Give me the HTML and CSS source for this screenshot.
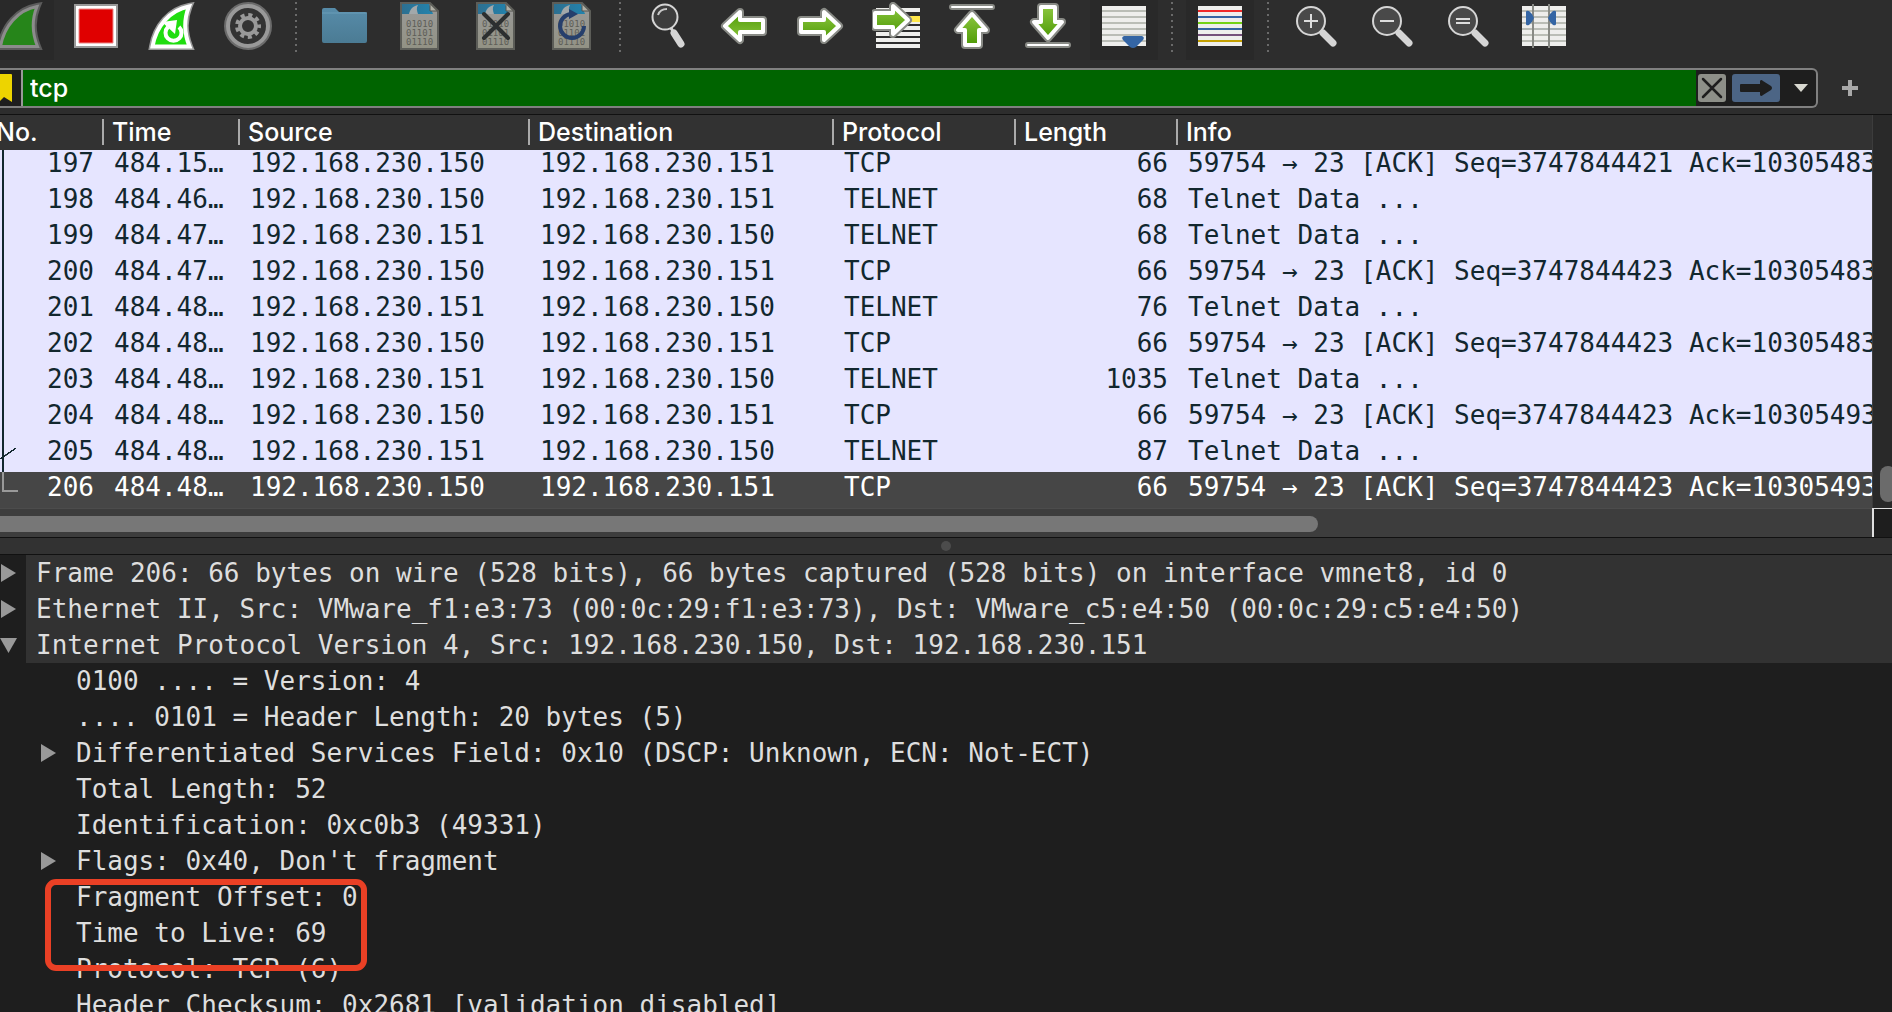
FILE: index.html
```html
<!DOCTYPE html>
<html lang="en">
<head>
<meta charset="utf-8">
<title>Packet capture</title>
<link rel="stylesheet" href="styles.css">
</head>
<body>
<svg class="defs" aria-hidden="true">
  <defs>
    <linearGradient id="leaf" x1="0" y1="0" x2="0" y2="1"><stop offset="0" stop-color="#8cc63f"/><stop offset="1" stop-color="#4e9a06"/></linearGradient>
    <linearGradient id="paper" x1="0" y1="0" x2="0" y2="1"><stop offset="0" stop-color="#9a9a9a"/><stop offset="1" stop-color="#929284"/></linearGradient>
    <linearGradient id="sky" x1="0" y1="0" x2="1" y2="0"><stop offset="0" stop-color="#2d6f90"/><stop offset="1" stop-color="#2283ad"/></linearGradient>
    <linearGradient id="folder" x1="0" y1="0" x2="0" y2="1"><stop offset="0" stop-color="#578ca9"/><stop offset="1" stop-color="#4b7b94"/></linearGradient>
    <path id="fin" d="M4.5 44.5C8 24 22 8 41 4.500C35.500 18 36.500 32 41.500 44.500Z"/>
    <path id="arrow" d="M43 24 28 10V18H5V30H28V38Z"/>
    <g id="file">
      <path d="M5 1H34L42 9V47H5Z" fill="url(#paper)"/>
      <path d="M6 2H33L37 12H6Z" fill="url(#sky)"/>
      <path d="M13 12C14 7 17 4 22 3C20 6 21 9 22 12Z" fill="#a2a8aa"/>
      <path d="M34 1V9H42Z" fill="#b0b0a6" stroke="#555550" stroke-width="1"/>
      <path d="M5 1H34L42 9V47H5Z" fill="none" stroke="#5c5d58" stroke-width="2"/>
      <g class="bits"><text x="10" y="25">01010</text><text x="10" y="34">01101</text><text x="10" y="43">01110</text></g>
    </g>
    <g id="lens">
      <circle cx="19" cy="19" r="14" fill="#494949" stroke="#d5d5d5" stroke-width="2"/>
      <path d="M31 31 41 41" stroke="#d5d5d5" stroke-width="7" stroke-linecap="round"/>
    </g>
    <path id="sheet" d="M2 4H46V44H2Z" fill="#eeeeec"/>
  </defs>
</svg>

<div class="toolbar" role="toolbar" aria-label="Main">
  <button class="tool pressed" aria-label="Start capture"><svg viewBox="0 0 48 48"><use href="#fin" fill="none" stroke="#5c5c5c" stroke-width="7"/><use href="#fin" fill="#26851a" stroke="#8c8c8c" stroke-width="3"/></svg></button>
  <button class="tool" aria-label="Stop capture"><svg viewBox="0 0 48 48"><path d="M2 2H46V46H2Z" fill="#999"/><path d="M4 4H44V44H4Z" fill="#fff"/><path d="M7 7H41V41H7Z" fill="#e00000" stroke="#e88" stroke-width="1"/></svg></button>
  <button class="tool" aria-label="Restart capture"><svg viewBox="0 0 48 48"><use href="#fin" fill="none" stroke="#999" stroke-width="7"/><use href="#fin" fill="#20dd10" stroke="#fff" stroke-width="4"/><path d="M31 25A8 8 0 1 1 20 25" fill="none" stroke="#fff" stroke-width="4"/><path d="M14 20 29 18 27 32Z" fill="#fff"/></svg></button>
  <button class="tool" aria-label="Capture options"><svg viewBox="0 0 48 48"><circle cx="24" cy="24" r="21" fill="#333" stroke="#6b6b6b" stroke-width="6"/><circle cx="24" cy="24" r="20" fill="#333" stroke="#999" stroke-width="4"/><circle cx="24" cy="24" r="8" fill="none" stroke="#999" stroke-width="4"/><circle cx="24" cy="24" r="11" fill="none" stroke="#999" stroke-width="4" stroke-dasharray="4 3.680" stroke-dashoffset="2"/></svg></button>
  <span class="divider"></span>
  <button class="tool" aria-label="Open file"><svg viewBox="0 0 48 48"><path d="M2 8Q2 6 4 6H15L19 10H45Q47 10 47 12V39Q47 41 45 41H4Q2 41 2 39Z" fill="url(#folder)"/><path d="M2 11H47" stroke="#6b9db8"/></svg></button>
  <button class="tool" aria-label="Save file"><svg viewBox="0 0 48 48"><use href="#file"/></svg></button>
  <button class="tool" aria-label="Close file"><svg viewBox="0 0 48 48"><use href="#file"/><path d="M12 12 36 36M36 12 12 36" stroke="#2c2f30" stroke-width="4" stroke-linecap="round"/></svg></button>
  <button class="tool" aria-label="Reload file"><svg viewBox="0 0 48 48"><use href="#file"/><path d="M36 24A12 12 0 1 1 23 12" fill="none" stroke="#263f6c" stroke-width="4"/><path d="M21 7 30 12 21 17Z" fill="#263f6c"/></svg></button>
  <span class="divider"></span>
  <button class="tool" aria-label="Find packet"><svg viewBox="0 0 48 48"><circle cx="21" cy="15" r="12.500" fill="#3d3d3d" stroke="#d5d5d5" stroke-width="2"/><path d="M14 13Q16 7 23 7" fill="none" stroke="#c8c8c8" stroke-width="2"/><path d="M27 26 30 31" stroke="#d5d5d5" stroke-width="3"/><path d="M30 31 37 42" stroke="#d5d5d5" stroke-width="7" stroke-linecap="round"/></svg></button>
  <button class="tool" aria-label="Previous packet"><svg viewBox="0 0 48 48"><g transform="rotate(180 24 24)" class="green"><use href="#arrow" class="rim"/><use href="#arrow" class="edge"/></g></svg></button>
  <button class="tool" aria-label="Next packet"><svg viewBox="0 0 48 48"><g class="green"><use href="#arrow" class="rim"/><use href="#arrow" class="edge"/></g></svg></button>
  <button class="tool" aria-label="Go to packet"><svg viewBox="0 0 48 48"><path d="M4 8H48M4 20H48M4 26H48M4 32H48M4 38H48M4 44H48" stroke="#eeeeec" stroke-width="4"/><path d="M4 17H48" stroke="#ffe74a" stroke-width="6"/><g transform="translate(-3 -6)" class="green"><path d="M39 24 24 10V17H6V31H24V38Z" class="rim"/><path d="M39 24 24 10V17H6V31H24V38Z" class="edge"/></g></svg></button>
  <button class="tool" aria-label="First packet"><svg viewBox="0 0 48 48"><path d="M4 5H44" class="rim line"/><path d="M4 5H44" class="edge line"/><g class="green"><path d="M24 12 10 28H17V43H31V28H38Z" class="rim"/><path d="M24 12 10 28H17V43H31V28H38Z" class="edge"/></g></svg></button>
  <button class="tool" aria-label="Last packet"><svg viewBox="0 0 48 48"><path d="M4 43H44" class="rim line"/><path d="M4 43H44" class="edge line"/><g class="green"><path d="M24 36 10 20H17V5H31V20H38Z" class="rim"/><path d="M24 36 10 20H17V5H31V20H38Z" class="edge"/></g></svg></button>
  <button class="tool pressed" aria-label="Auto scroll"><svg viewBox="0 0 48 48"><use href="#sheet"/><path d="M2 9H46M2 15H46M2 21H46M2 27H46M2 33H46M2 39H46" stroke="#babdb6" stroke-width="2"/><path d="M24 34H42Q45 35 43 38L36 45Q33 47 30 45L23 38Q21 35 24 34Z" fill="#3465a4"/></svg></button>
  <span class="divider"></span>
  <button class="tool pressed" aria-label="Colorize packets"><svg viewBox="0 0 48 48"><use href="#sheet"/><g stroke-width="2"><path d="M2 9H46" stroke="#ef2929"/><path d="M2 15H46M2 27H46" stroke="#3465a4"/><path d="M2 21H46" stroke="#73d216"/><path d="M2 33H46" stroke="#75507b"/><path d="M2 39H46" stroke="#c4a000"/></g></svg></button>
  <span class="divider"></span>
  <button class="tool" aria-label="Zoom in"><svg viewBox="0 0 48 48"><use href="#lens"/><path d="M12 19H26M19 12V26" stroke="#ddd" stroke-width="2"/></svg></button>
  <button class="tool" aria-label="Zoom out"><svg viewBox="0 0 48 48"><use href="#lens"/><path d="M12 19H26" stroke="#ddd" stroke-width="2"/></svg></button>
  <button class="tool" aria-label="Normal size"><svg viewBox="0 0 48 48"><use href="#lens"/><path d="M12 17H26M12 21H26" stroke="#ddd" stroke-width="2"/></svg></button>
  <button class="tool" aria-label="Resize columns"><svg viewBox="0 0 48 48"><use href="#sheet"/><path d="M2 9H46M2 15H46M2 21H46M2 27H46M2 33H46M2 39H46" stroke="#babdb6" stroke-width="2"/><path d="M13 2V46M29 2V46" stroke="#888a85" stroke-width="2"/><path d="M6 10Q6 8 9 9Q12 11 14 16Q12 21 9 23Q6 24 6 22ZM36 10Q36 8 33 9Q30 11 28 16Q30 21 33 23Q36 24 36 22Z" fill="#3465a4"/></svg></button>
</div>

<form class="filter-bar">
  <div class="filter">
    <button type="button" class="bookmark" aria-label="Bookmarks"><svg width="12" height="28" viewBox="0 0 12 28"><path d="M0 0H11Q12 0 12 1V28L4 23 0 27Z" fill="#edd400"/></svg></button>
    <input class="filter-text" type="text" value="tcp" aria-label="Display filter" spellcheck="false">
    <button type="button" class="clear" aria-label="Clear"><svg width="28" height="28" viewBox="0 0 28 28"><path d="M5 5 23 23M23 5 5 23" stroke="#1e1e1e" stroke-width="2.500" stroke-linecap="round"/></svg></button>
    <button type="button" class="apply" aria-label="Apply"><svg width="48" height="28" viewBox="0 0 48 28"><path d="M9 10H28V7Q29 5 31 7L39 12Q41 14 39 16L31 21Q29 23 28 21V18H9Q8 18 8 17V11Q8 10 9 10Z" fill="#1e1e1e"/></svg></button>
    <button type="button" class="recent" aria-label="Recent filters"><svg width="14" height="8" viewBox="0 0 14 8"><path d="M0 0H14L7 8Z" fill="#d8d8d0"/></svg></button>
  </div>
  <button type="button" class="add" aria-label="Add filter button"><svg width="16" height="16" viewBox="0 0 16 16"><path d="M8 0V16M0 8H16" stroke="#a8a8a8" stroke-width="4"/></svg></button>
</form>

<section class="packets">
  <div class="packet-list">
    <table>
      <colgroup><col class="c-no"><col class="c-time"><col class="c-source"><col class="c-dest"><col class="c-proto"><col class="c-len"><col></colgroup>
      <thead><tr><th class="first">No.</th><th><span>Time</span></th><th><span>Source</span></th><th><span>Destination</span></th><th><span>Protocol</span></th><th><span>Length</span></th><th><span>Info</span></th></tr></thead>
      <tbody>
        <tr class="top"><td>197</td><td>484.15…</td><td>192.168.230.150</td><td>192.168.230.151</td><td>TCP</td><td>66</td><td>59754 → 23 [ACK] Seq=3747844421 Ack=10305483</td></tr>
        <tr><td>198</td><td>484.46…</td><td>192.168.230.150</td><td>192.168.230.151</td><td>TELNET</td><td>68</td><td>Telnet Data ...</td></tr>
        <tr><td>199</td><td>484.47…</td><td>192.168.230.151</td><td>192.168.230.150</td><td>TELNET</td><td>68</td><td>Telnet Data ...</td></tr>
        <tr><td>200</td><td>484.47…</td><td>192.168.230.150</td><td>192.168.230.151</td><td>TCP</td><td>66</td><td>59754 → 23 [ACK] Seq=3747844423 Ack=10305483</td></tr>
        <tr><td>201</td><td>484.48…</td><td>192.168.230.151</td><td>192.168.230.150</td><td>TELNET</td><td>76</td><td>Telnet Data ...</td></tr>
        <tr><td>202</td><td>484.48…</td><td>192.168.230.150</td><td>192.168.230.151</td><td>TCP</td><td>66</td><td>59754 → 23 [ACK] Seq=3747844423 Ack=10305483</td></tr>
        <tr><td>203</td><td>484.48…</td><td>192.168.230.151</td><td>192.168.230.150</td><td>TELNET</td><td>1035</td><td>Telnet Data ...</td></tr>
        <tr><td>204</td><td>484.48…</td><td>192.168.230.150</td><td>192.168.230.151</td><td>TCP</td><td>66</td><td>59754 → 23 [ACK] Seq=3747844423 Ack=10305493</td></tr>
        <tr><td class="acked">205</td><td>484.48…</td><td>192.168.230.151</td><td>192.168.230.150</td><td>TELNET</td><td>87</td><td>Telnet Data ...</td></tr>
        <tr class="selected"><td>206</td><td>484.48…</td><td>192.168.230.150</td><td>192.168.230.151</td><td>TCP</td><td>66</td><td>59754 → 23 [ACK] Seq=3747844423 Ack=10305493</td></tr>
      </tbody>
    </table>
  </div>
  <div class="v-scroll"><div class="v-thumb"></div></div>
  <div class="h-scroll"><div class="h-thumb"></div></div>
  <div class="corner"></div>
</section>

<div class="splitter"><span class="grip"></span></div>

<section class="details">
  <ul class="tree">
    <li class="node layer closed"><span>Frame 206: 66 bytes on wire (528 bits), 66 bytes captured (528 bits) on interface vmnet8, id 0</span></li>
    <li class="node layer closed"><span>Ethernet II, Src: VMware_f1:e3:73 (00:0c:29:f1:e3:73), Dst: VMware_c5:e4:50 (00:0c:29:c5:e4:50)</span></li>
    <li class="node layer open"><span>Internet Protocol Version 4, Src: 192.168.230.150, Dst: 192.168.230.151</span></li>
    <li>
      <ul class="tree fields">
        <li class="node"><span>0100 .... = Version: 4</span></li>
        <li class="node"><span>.... 0101 = Header Length: 20 bytes (5)</span></li>
        <li class="node closed"><span>Differentiated Services Field: 0x10 (DSCP: Unknown, ECN: Not-ECT)</span></li>
        <li class="node"><span>Total Length: 52</span></li>
        <li class="node"><span>Identification: 0xc0b3 (49331)</span></li>
        <li class="node closed"><span>Flags: 0x40, Don't fragment</span></li>
        <li class="node marked"><span>Fragment Offset: 0</span></li>
        <li class="node"><span>Time to Live: 69</span></li>
        <li class="node"><span>Protocol: TCP (6)</span></li>
        <li class="node"><span>Header Checksum: 0x2681 [validation disabled]</span></li>
      </ul>
    </li>
  </ul>
</section>
</body>
</html>
```

FILE: styles.css
```css
*, *::before, *::after { box-sizing: border-box; }

body {
  margin: 0;
  height: 100vh;
  overflow: hidden;
  display: flex;
  flex-direction: column;
  background: #2d2d2d;
  color: #fff;
  font-family: Inter, "Liberation Sans", sans-serif;
  font-size: 25px;
  font-weight: 500;
}

button {
  border: 0;
  padding: 0;
  background: none;
  font: inherit;
  color: inherit;
}

svg { display: block; flex: none; }
.defs { position: absolute; width: 0; height: 0; }

/* Toolbar */
.toolbar {
  display: flex;
  gap: 8px;
  height: 60px;
  flex: none;
  margin-left: -14px;
}
.tool {
  flex: none;
  width: 68px;
  height: 60px;
  padding: 2px 10px 10px;
}
.tool svg { width: 48px; height: 48px; }
.pressed { background: #292929; }
.divider {
  flex: none;
  width: 12px;
  height: 56px;
  background: radial-gradient(circle, #6a6a6a 1px, transparent 1px) center top / 12px 6px repeat-y;
}
.green { fill: url(#leaf); }
.rim { stroke: #888a85; stroke-width: 8px; stroke-linejoin: round; }
.edge { stroke: #fff; stroke-width: 4px; stroke-linejoin: round; }
.line { stroke-linecap: round; }
.rim.line { stroke-width: 6px; }
.edge.line { stroke-width: 2px; }
.bits { font: 9px "DejaVu Sans Mono", monospace; fill: #5e5e58; }

/* Display filter */
.filter-bar {
  display: flex;
  align-items: center;
  flex: none;
  height: 55px;
  margin: 0;
  padding-top: 2px;
  border-bottom: 1px solid #111;
}
.filter {
  flex: 1;
  display: flex;
  align-items: center;
  height: 40px;
  border: 2px solid #808080;
  border-left: 0;
  border-radius: 0 6px 6px 0;
  background: #1e1e1e;
  overflow: hidden;
}
.bookmark {
  width: 23px;
  height: 36px;
  flex: none;
  border-right: 2px solid #999;
}
.filter-text {
  flex: 1;
  height: 36px;
  padding: 0 7px;
  border: 0;
  outline: 0;
  background: #006400;
  color: #fff;
  font: inherit;
}
.clear, .apply { height: 28px; border-radius: 3px; }
.clear { width: 28px; margin-left: 2px; background: #8d8f88; }
.apply { width: 48px; margin-left: 6px; background: #4c6585; }
.recent { width: 36px; padding-left: 14px; }
.add { width: 74px; padding-left: 24px; }

/* Packet list */
.packets {
  flex: none;
  display: grid;
  grid-template-columns: minmax(0, 1fr) 20px;
}
.packet-list { overflow: hidden; }
table {
  width: 100%;
  table-layout: fixed;
  border-collapse: collapse;
}
.c-no { width: 102px; }
.c-time { width: 136px; }
.c-source { width: 290px; }
.c-dest { width: 304px; }
.c-proto { width: 182px; }
.c-len { width: 162px; }
th {
  height: 35px;
  padding: 0 0 1px;
  background: #323232;
  font-weight: 500;
  line-height: 26px;
  text-align: left;
}
th span {
  display: block;
  padding-left: 8px;
  border-left: 2px solid #aaa;
}
.first { text-indent: -4px; }
td {
  height: 36px;
  padding: 0 0 7px 12px;
  overflow: hidden;
  white-space: nowrap;
  vertical-align: bottom;
  font-family: "DejaVu Sans Mono", monospace;
  font-size: 26px;
  font-weight: 400;
  line-height: 27px;
}
tbody tr { background: #e6e5ff; color: #12272e; }
.top td { height: 34px; }
td:first-child {
  padding-right: 8px;
  text-align: right;
  background: linear-gradient(#12272e, #12272e) 2px 0 / 2px 100% no-repeat;
}
td:nth-child(6) { padding-right: 8px; text-align: right; }
td.acked:first-child {
  background:
    linear-gradient(#12272e, #12272e) 2px 0 / 2px 100% no-repeat,
    linear-gradient(to bottom right, transparent 46%, #12272e 47%, #12272e 54%, transparent 55%) 0 12px / 16px 11px no-repeat;
}
tbody .selected { background: #464646; color: #fff; }
.selected td:first-child {
  background:
    linear-gradient(#999, #999) 2px 0 / 2px 18px no-repeat,
    linear-gradient(#999, #999) 2px 18px / 16px 2px no-repeat;
}
.v-scroll {
  display: flex;
  flex-direction: column;
  justify-content: flex-end;
  padding: 0 0 6px 7px;
  border-left: 1px solid #3c3c3c;
  background: #292929;
  overflow: hidden;
}
.v-thumb { width: 16px; height: 36px; border-radius: 8px; background: #6b6b6b; }
.h-scroll {
  height: 29px;
  padding-top: 7px;
  border-top: 1px solid #4c4c4c;
  background: #3d3d3d;
}
.h-thumb { width: 1318px; max-width: 100%; height: 16px; border-radius: 0 8px 8px 0; background: #777; }
.corner {
  border: solid #e0e0e0;
  border-width: 1px 0 0 2px;
  background: #1e1e1e;
}

/* Splitter between the panes */
.splitter {
  display: flex;
  align-items: center;
  justify-content: center;
  flex: none;
  height: 18px;
  border: solid #111;
  border-width: 1px 0;
  background: #323232;
}
.grip { width: 10px; height: 10px; border-radius: 50%; background: #4c4c4c; }

/* Packet details */
.details {
  flex: 1;
  min-height: 0;
  overflow: hidden;
  background: #1e1e1e;
  color: #dedede;
  font-family: "DejaVu Sans Mono", monospace;
  font-size: 26px;
  font-weight: 400;
  line-height: 36px;
}
.tree { margin: 0; padding: 0; list-style: none; }
.node {
  display: flex;
  position: relative;
  height: 36px;
  padding-left: 26px;
  white-space: nowrap;
}
.node span { flex: 1; padding-left: 10px; }
.layer span { background: #323232; }
.fields { padding-left: 40px; }
.closed::before, .open::before {
  content: "";
  position: absolute;
  background: #999;
}
.closed::before {
  left: 1px;
  top: 9px;
  width: 15px;
  height: 18px;
  clip-path: polygon(0 0, 100% 50%, 0 100%);
}
.open::before {
  left: 0;
  top: 11px;
  width: 17px;
  height: 15px;
  clip-path: polygon(0 0, 100% 0, 50% 100%);
}
/* Highlight drawn over the fragment offset and TTL rows */
.marked::after {
  content: "";
  position: absolute;
  z-index: 1;
  left: 5px;
  top: 0;
  width: 322px;
  height: 92px;
  border: 6px solid #ea4025;
  border-radius: 11px;
}
```
